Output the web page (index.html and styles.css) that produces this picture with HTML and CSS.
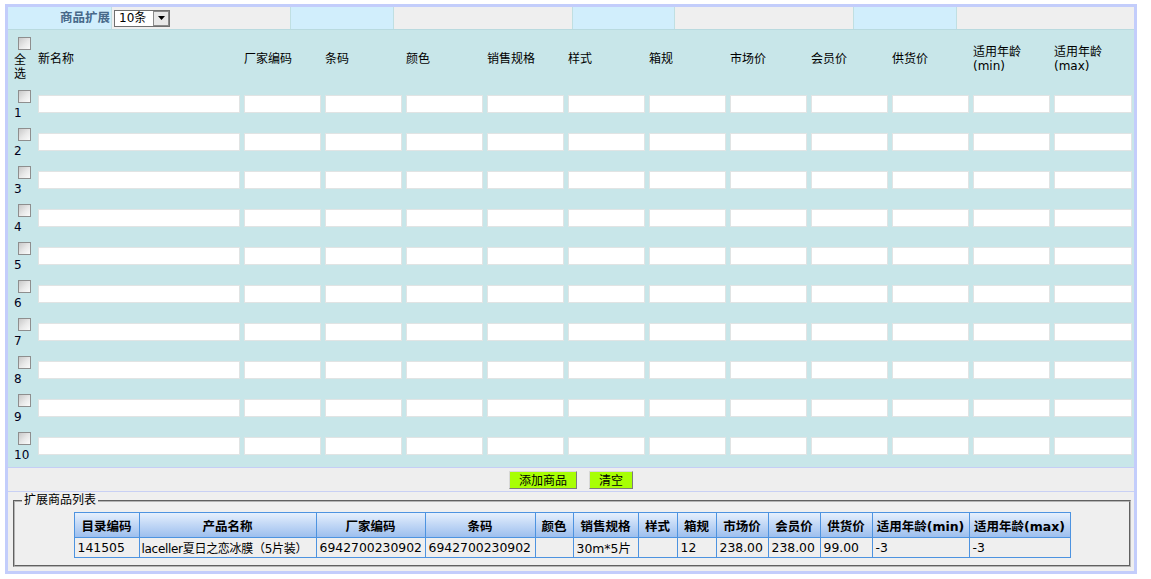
FILE: index.html
```html
<!DOCTYPE html>
<html lang="zh-CN">
<head>
<meta charset="utf-8">
<title>商品扩展</title>
<link rel="stylesheet" href="styles.css">
</head>
<body>
<div class="frame">
  <div class="bar">
    <div class="bar-lbl">商品扩展</div>
    <div class="bar-val">
      <div class="sel"><span class="sel-text">10条</span><span class="sel-btn"><svg width="7" height="4" viewBox="0 0 7 4"><path d="M0 0H7L3.5 4Z" fill="#000"/></svg></span></div>
    </div>
    <div class="bar-lbl"></div>
    <div class="bar-val"></div>
    <div class="bar-lbl"></div>
    <div class="bar-val"></div>
    <div class="bar-lbl"></div>
    <div class="bar-val"></div>
  </div>

  <div class="form">
    <table class="grid">
      <colgroup>
        <col class="c-chk"><col class="c-name">
        <col class="c-s"><col class="c-s"><col class="c-s"><col class="c-s"><col class="c-s"><col class="c-s">
        <col class="c-s"><col class="c-s"><col class="c-s"><col class="c-s"><col>
      </colgroup>
      <thead>
        <tr class="head">
          <th class="chk"><input type="checkbox" class="cb">全<br>选</th>
          <th>新名称</th><th>厂家编码</th><th>条码</th><th>颜色</th><th>销售规格</th><th>样式</th>
          <th>箱规</th><th>市场价</th><th>会员价</th><th>供货价</th><th>适用年龄<br>(min)</th><th>适用年龄<br>(max)</th>
        </tr>
      </thead>
      <tbody>
        <tr><td class="chk"><input type="checkbox" class="cb"><span class="num">1</span></td><td><input class="tx"></td><td><input class="tx"></td><td><input class="tx"></td><td><input class="tx"></td><td><input class="tx"></td><td><input class="tx"></td><td><input class="tx"></td><td><input class="tx"></td><td><input class="tx"></td><td><input class="tx"></td><td><input class="tx"></td><td><input class="tx"></td></tr>
        <tr><td class="chk"><input type="checkbox" class="cb"><span class="num">2</span></td><td><input class="tx"></td><td><input class="tx"></td><td><input class="tx"></td><td><input class="tx"></td><td><input class="tx"></td><td><input class="tx"></td><td><input class="tx"></td><td><input class="tx"></td><td><input class="tx"></td><td><input class="tx"></td><td><input class="tx"></td><td><input class="tx"></td></tr>
        <tr><td class="chk"><input type="checkbox" class="cb"><span class="num">3</span></td><td><input class="tx"></td><td><input class="tx"></td><td><input class="tx"></td><td><input class="tx"></td><td><input class="tx"></td><td><input class="tx"></td><td><input class="tx"></td><td><input class="tx"></td><td><input class="tx"></td><td><input class="tx"></td><td><input class="tx"></td><td><input class="tx"></td></tr>
        <tr><td class="chk"><input type="checkbox" class="cb"><span class="num">4</span></td><td><input class="tx"></td><td><input class="tx"></td><td><input class="tx"></td><td><input class="tx"></td><td><input class="tx"></td><td><input class="tx"></td><td><input class="tx"></td><td><input class="tx"></td><td><input class="tx"></td><td><input class="tx"></td><td><input class="tx"></td><td><input class="tx"></td></tr>
        <tr><td class="chk"><input type="checkbox" class="cb"><span class="num">5</span></td><td><input class="tx"></td><td><input class="tx"></td><td><input class="tx"></td><td><input class="tx"></td><td><input class="tx"></td><td><input class="tx"></td><td><input class="tx"></td><td><input class="tx"></td><td><input class="tx"></td><td><input class="tx"></td><td><input class="tx"></td><td><input class="tx"></td></tr>
        <tr><td class="chk"><input type="checkbox" class="cb"><span class="num">6</span></td><td><input class="tx"></td><td><input class="tx"></td><td><input class="tx"></td><td><input class="tx"></td><td><input class="tx"></td><td><input class="tx"></td><td><input class="tx"></td><td><input class="tx"></td><td><input class="tx"></td><td><input class="tx"></td><td><input class="tx"></td><td><input class="tx"></td></tr>
        <tr><td class="chk"><input type="checkbox" class="cb"><span class="num">7</span></td><td><input class="tx"></td><td><input class="tx"></td><td><input class="tx"></td><td><input class="tx"></td><td><input class="tx"></td><td><input class="tx"></td><td><input class="tx"></td><td><input class="tx"></td><td><input class="tx"></td><td><input class="tx"></td><td><input class="tx"></td><td><input class="tx"></td></tr>
        <tr><td class="chk"><input type="checkbox" class="cb"><span class="num">8</span></td><td><input class="tx"></td><td><input class="tx"></td><td><input class="tx"></td><td><input class="tx"></td><td><input class="tx"></td><td><input class="tx"></td><td><input class="tx"></td><td><input class="tx"></td><td><input class="tx"></td><td><input class="tx"></td><td><input class="tx"></td><td><input class="tx"></td></tr>
        <tr><td class="chk"><input type="checkbox" class="cb"><span class="num">9</span></td><td><input class="tx"></td><td><input class="tx"></td><td><input class="tx"></td><td><input class="tx"></td><td><input class="tx"></td><td><input class="tx"></td><td><input class="tx"></td><td><input class="tx"></td><td><input class="tx"></td><td><input class="tx"></td><td><input class="tx"></td><td><input class="tx"></td></tr>
        <tr class="last"><td class="chk"><input type="checkbox" class="cb"><span class="num">10</span></td><td><input class="tx"></td><td><input class="tx"></td><td><input class="tx"></td><td><input class="tx"></td><td><input class="tx"></td><td><input class="tx"></td><td><input class="tx"></td><td><input class="tx"></td><td><input class="tx"></td><td><input class="tx"></td><td><input class="tx"></td><td><input class="tx"></td></tr>
      </tbody>
    </table>
  </div>

  <div class="actions">
    <button class="btn" type="button">添加商品</button>
    <button class="btn" type="button">清空</button>
  </div>

  <div class="listwrap">
    <fieldset class="fs">
      <legend class="lg">扩展商品列表</legend>
      <table class="list">
        <colgroup>
          <col class="w65"><col class="w177"><col class="w109"><col class="w110"><col class="w38"><col class="w65">
          <col class="w39"><col class="w39"><col class="w52"><col class="w52"><col class="w52"><col class="w97"><col class="w101">
        </colgroup>
        <thead>
          <tr class="lh">
            <th>目录编码</th><th>产品名称</th><th>厂家编码</th><th>条码</th><th>颜色</th><th>销售规格</th><th>样式</th>
            <th>箱规</th><th>市场价</th><th>会员价</th><th>供货价</th><th>适用年龄(min)</th><th>适用年龄(max)</th>
          </tr>
        </thead>
        <tbody>
          <tr class="ld">
            <td>141505</td><td class="pname">laceller夏日之恋冰膜（5片装）</td><td>6942700230902</td><td>6942700230902</td><td></td><td>30m*5片</td><td></td>
            <td>12</td><td>238.00</td><td>238.00</td><td>99.00</td><td>-3</td><td>-3</td>
          </tr>
        </tbody>
      </table>
    </fieldset>
  </div>
</div>
</body>
</html>
```

FILE: styles.css
```css
* { box-sizing: border-box; }

body {
  margin: 0;
  background: #fff;
  font-family: "DejaVu Sans", "Noto Sans CJK SC", sans-serif;
  font-size: 12px;
  color: #000;
}

.frame {
  margin: 4px 0 0 5px;
  width: 1132px;
  height: 570px;
  border: 3px solid #c3cdfb;
  background: #eeeeee;
  display: flex;
  flex-direction: column;
}

/* top bar */
.bar {
  display: grid;
  grid-template-columns: 103px 179px 103px 179px 102px 179px 103px 1fr;
  height: 23px;
  border-bottom: 1px solid #b9dadf;
}
.bar-lbl {
  background: #d1eefc;
  border-left: 1px solid #c0dfe2;
  text-align: right;
  font-weight: bold;
  color: #48698a;
  font-size: 12.5px;
  line-height: 22px;
  padding-right: 1px;
}
.bar-lbl:first-child { border-left: 0; }
.bar-val {
  background: #efefef;
  border-left: 1px solid #c0dfe2;
  display: flex;
  align-items: center;
}
.sel {
  display: flex;
  width: 56px;
  height: 17px;
  margin-left: 2px;
  border: 1px solid #6f6f6f;
  background: #fff;
}
.sel-text {
  flex: 1;
  padding-left: 4px;
  line-height: 15px;
  font-size: 12px;
}
.sel-btn {
  width: 16px;
  border: 1px solid #8a8a8a;
  background: #e8e8e8;
  display: flex;
  align-items: center;
  justify-content: center;
}

/* form grid */
.form {
  background: #c8e6e9;
  border-bottom: 1px solid #c5cef5;
}
.grid {
  width: 100%;
  table-layout: fixed;
  border-collapse: separate;
  border-spacing: 0;
}
.c-chk { width: 28px; }
.c-name { width: 206px; }
.c-s { width: 81px; }

.grid tr.head { height: 58px; }
.grid tbody tr { height: 38px; }
.grid tbody tr.last { height: 37px; }

.grid th {
  font-weight: normal;
  text-align: left;
  vertical-align: middle;
  padding: 0 2px;
  line-height: 14px;
}
.grid td {
  padding: 0 2px;
  vertical-align: top;
}
.grid th.chk {
  vertical-align: top;
  padding: 5px 0 0 6px;
}
.grid td.chk {
  padding: 0 0 0 6px;
}
.cb {
  -webkit-appearance: none;
  appearance: none;
  display: block;
  width: 13px;
  height: 13px;
  margin: 2px 0 3px 4px;
  border: 1px solid #8e8e8e;
  background: linear-gradient(135deg, #c9c9c9 0%, #e9e9e9 55%, #fbfbfb 100%);
}
.num {
  display: block;
  line-height: 15px;
  color: #00001a;
}
.tx {
  display: block;
  width: 100%;
  height: 18px;
  margin-top: 7px;
  border: 1px solid #e1e4e4;
  background: #fff;
  padding: 0 2px;
  font: inherit;
}

/* actions */
.actions {
  height: 24px;
  padding-top: 3px;
  display: flex;
  justify-content: center;
  align-items: flex-start;
  gap: 12px;
  border-bottom: 1px solid #c8d0f4;
  background: #eeeeee;
}
.btn {
  height: 18px;
  padding: 0 9px;
  margin: 0;
  font-family: "Noto Sans CJK SC", sans-serif;
  font-size: 12px;
  line-height: 16px;
  color: #000;
  background: #a8ff04;
  border: 1px solid;
  border-color: #d8d8d8 #7c7c7c #7c7c7c #d8d8d8;
}

/* list */
.listwrap {
  flex: 1;
  background: #efefef;
}
.fs {
  margin: 1px 3px 4px 5px;
  padding: 4px 7px 7px;
  border: 2px groove #b4b4b4;
  min-inline-size: 0;
}
.lg {
  padding: 0 2px;
  line-height: 15px;
  font-size: 12px;
}
.list {
  width: 997px;
  margin: 0 auto;
  table-layout: fixed;
  border-collapse: separate;
  border-spacing: 0;
  border-left: 1px solid #4d93e0;
  border-top: 1px solid #4d93e0;
}
.list th, .list td {
  border-right: 1px solid #4d93e0;
  border-bottom: 1px solid #4d93e0;
  white-space: nowrap;
  overflow: hidden;
}
.list th {
  background: linear-gradient(#e6f0fd, #c4d9f6 45%, #9dbfee);
  font-weight: bold;
  text-align: center;
  padding: 0;
  font-size: 12.5px;
}
.list td {
  padding: 0 0 0 3px;
  text-align: left;
  font-size: 12.4px;
}
.list td.pname {
  padding-left: 2px;
  font-size: 12px;
  letter-spacing: -0.3px;
}
.list tr.lh { height: 25px; }
.list tr.ld { height: 20px; }

.w65 { width: 65px; }
.w177 { width: 177px; }
.w109 { width: 109px; }
.w110 { width: 110px; }
.w38 { width: 38px; }
.w39 { width: 39px; }
.w52 { width: 52px; }
.w97 { width: 97px; }
.w101 { width: 101px; }
```
